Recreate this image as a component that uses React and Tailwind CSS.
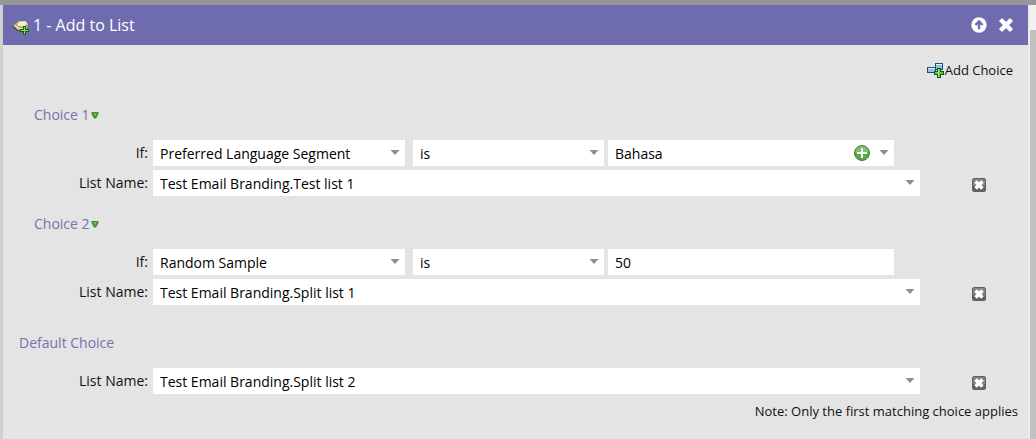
import { useId } from 'react';

const AddToListIcon = () => (
  <svg viewBox="0 0 16 16" className="w-4 h-4 shrink-0" aria-hidden="true">
    <path d="M0 5.5 L4 2.5 L6 1 L13 1 L15 4 L14 9 L10 11 L4 10.5 L0.5 7 Z" fill="#b9ae7c" />
    <path d="M4 4.5 L6.5 1.5 L13 1.5 L14 4 L11 6.5 L6 6.5 Z" fill="#f3edc9" />
    <path d="M1 6 L4 5 L6 7.5 L11 7.5 L10 9 L5 9.5 Z" fill="#e4dba9" />
    <path d="M0 6.5 L4.5 10.5 L9 11" fill="none" stroke="#3f3b2c" strokeWidth="1.2" />
    <path d="M3 4.5 L6 7 L11 7" fill="none" stroke="#857c56" strokeWidth="0.8" />
    <path d="M10 6h3v3h3v3h-3v3h-3v-3h-3v-3h3z" fill="#17600f" />
    <path d="M11 7h1v3h3v1h-3v3h-1v-3h-3v-1h3z" fill="#7ee05a" />
  </svg>
);

const AddChoiceIcon = () => (
  <svg viewBox="0 0 17 16" className="w-[17px] h-4 shrink-0" aria-hidden="true">
    <rect x="0.5" y="4.5" width="8" height="5" fill="#8fc3e6" stroke="#1d4f7c" />
    <rect x="8.5" y="0.5" width="7" height="6" fill="#8fc3e6" stroke="#1d4f7c" />
    <path d="M1 5.5h7M9 1.5h6" stroke="#dff0fb" />
    <path d="M10 5h4v3h3v4h-3v3h-4v-3h-3v-4h3z" fill="#14560f" />
    <path d="M11 6h2v3h3v2h-3v3h-2v-3h-3v-2h3z" fill="#5fca45" />
    <path d="M11.5 6.5v7" stroke="#b4f09c" />
  </svg>
);

const CollapseIcon = () => (
  <svg viewBox="0 0 16 16" className="w-4 h-4" aria-hidden="true">
    <circle cx="8" cy="8" r="7.7" fill="#fff" />
    <path d="M8 4.2v8M4.4 8 8 4.4 11.6 8" fill="none" stroke="#6e6bae" strokeWidth="2.4" />
  </svg>
);

const CloseIcon = () => (
  <svg viewBox="0 0 16 16" className="w-4 h-4" aria-hidden="true">
    <path d="M2.5 2.5 13.5 13.5M13.5 2.5 2.5 13.5" stroke="#fff" strokeWidth="4.4" />
  </svg>
);

const GreenArrow = () => (
  <svg viewBox="0 0 8 8" className="w-2 h-2" aria-hidden="true">
    <path d="M0.5 1h7v2L5 7.5H3L0.5 3z" fill="#3f8c2c" />
    <path d="M2 2h4L4 5.5z" fill="#77bb55" />
  </svg>
);

const DeleteIcon = () => (
  <svg viewBox="0 0 14 14" className="w-3.5 h-3.5" aria-hidden="true">
    <rect x="0.5" y="0.5" width="13" height="13" rx="1.5" fill="#858585" stroke="#606060" />
    <path d="M1 8h12v5H1z" fill="#626262" />
    <path d="M3.6 3.6 10.4 10.4M10.4 3.6 3.6 10.4" stroke="#fff" strokeWidth="3.6" />
  </svg>
);

const PlusIcon = () => (
  <svg viewBox="0 0 16 16" className="w-4 h-4" aria-hidden="true">
    <circle cx="8" cy="8" r="7.5" fill="#59a94a" stroke="#4b7a45" />
    <path d="M1.5 7.5a6.5 6.5 0 0 1 13 0z" fill="#7cc46c" />
    <path d="M8 3v10M3 8h10" stroke="#fff" strokeWidth="2" />
  </svg>
);

const Caret = () => (
  <svg viewBox="0 0 10 5" className="w-2.5 h-[5px]" aria-hidden="true">
    <path d="M0.5 0h9L5 5z" fill="#8f8f8f" />
  </svg>
);

// White combo box with a small caret, and an optional button before the caret
const Combo = ({ id, label, value, onAdd }) => (
  <div className="relative h-[26px] min-w-0">
    <select
      id={id}
      aria-label={label}
      defaultValue={value}
      className="appearance-none w-full h-full bg-white pl-[7px] pr-6 pt-0.5 text-sm leading-6 text-black"
    >
      <option>{value}</option>
    </select>
    <span className="absolute right-[5px] top-2.5 pointer-events-none">
      <Caret />
    </span>
    {onAdd && (
      <button type="button" aria-label="Add value" className="absolute right-6 top-[5px]">
        <PlusIcon />
      </button>
    )}
  </div>
);

const Row = ({ label, htmlFor, children, removable }) => (
  <div className="grid grid-cols-[145px_minmax(0,1fr)_103px] gap-x-[5px] h-[26px]">
    <label htmlFor={htmlFor} className="text-right text-sm leading-[26px] text-[#111]">
      {label}
    </label>
    {children}
    {removable && (
      <button type="button" aria-label="Remove choice" className="justify-self-start self-center ml-[47px] mt-1">
        <DeleteIcon />
      </button>
    )}
  </div>
);

const ListRow = ({ list }) => {
  const id = useId();
  return (
    <Row label="List Name:" htmlFor={id} removable>
      <Combo id={id} value={list} />
    </Row>
  );
};

const Choice = ({ title, field, value, picker, list }) => {
  const id = useId();
  return (
    <section className="pb-2">
      <h2 className="flex items-center gap-px h-10 mb-[5px] pl-[31px] text-sm text-[#7672b0]">
        {title}
        <button type="button" aria-label={`${title} options`}>
          <GreenArrow />
        </button>
      </h2>
      <div className="flex flex-col gap-1">
        <Row label="If:" htmlFor={id}>
          <div className="grid grid-cols-[256fr_191fr_286fr] gap-1 pr-[26px]">
            <div className="pr-1">
              <Combo id={id} value={field} />
            </div>
            <Combo label="Operator" value="is" />
            {picker ? (
              <Combo label="Value" value={value} onAdd />
            ) : (
              <input
                type="text"
                aria-label="Value"
                defaultValue={value}
                className="w-full h-[26px] min-w-0 bg-white pl-[7px] text-sm leading-6 text-black"
              />
            )}
          </div>
        </Row>
        <ListRow list={list} />
      </div>
    </section>
  );
};

const choices = [
  {
    title: 'Choice 1',
    field: 'Preferred Language Segment',
    value: 'Bahasa',
    picker: true,
    list: 'Test Email Branding.Test list 1',
  },
  {
    title: 'Choice 2',
    field: 'Random Sample',
    value: '50',
    list: 'Test Email Branding.Split list 1',
  },
];

export default function App() {
  return (
    <div className="min-h-screen flex flex-col bg-[#e4e4e4] font-['Open_Sans','Noto_Sans',sans-serif]">
      <div className="h-[5px] bg-[#979799]" />
      <div className="flex flex-1">
        <div className="w-[3px] bg-[#d0d0d0]" />

        <main className="flex-1 min-w-0">
          <header className="flex items-center h-10 pl-2.5 pr-3.5 bg-[#6e6bae] text-white">
            <div className="pt-1.5">
              <AddToListIcon />
            </div>
            <h1 className="pl-1 text-base">1 - Add to List</h1>
            <div className="ml-auto flex items-center gap-[11px]">
              <button type="button" aria-label="Collapse">
                <CollapseIcon />
              </button>
              <button type="button" aria-label="Close">
                <CloseIcon />
              </button>
            </div>
          </header>

          <div className="flex items-center justify-end h-[50px] pt-0.5 pr-[15px]">
            <button type="button" className="flex items-center gap-px text-[13px] text-[#111]">
              <AddChoiceIcon />
              Add Choice
            </button>
          </div>

          {choices.map((choice) => (
            <Choice key={choice.title} {...choice} />
          ))}

          {/* Fallback when nothing above matches */}
          <section className="pt-2.5">
            <h2 className="flex items-center h-10 mb-[5px] pl-4 text-sm text-[#7672b0]">Default Choice</h2>
            <ListRow list="Test Email Branding.Split list 2" />
          </section>

          <p className="pr-2.5 text-right text-[13px] leading-[34px] text-[#111]">
            Note: Only the first matching choice applies
          </p>
        </main>

        {/* Scrollbar */}
        <div className="w-0.5 bg-[#ededed]" />
        <div className="w-1.5 flex flex-col bg-[#c1c1c1]">
          <div className="h-[25px] bg-[#f1f1f1]" />
        </div>
      </div>
    </div>
  );
}
